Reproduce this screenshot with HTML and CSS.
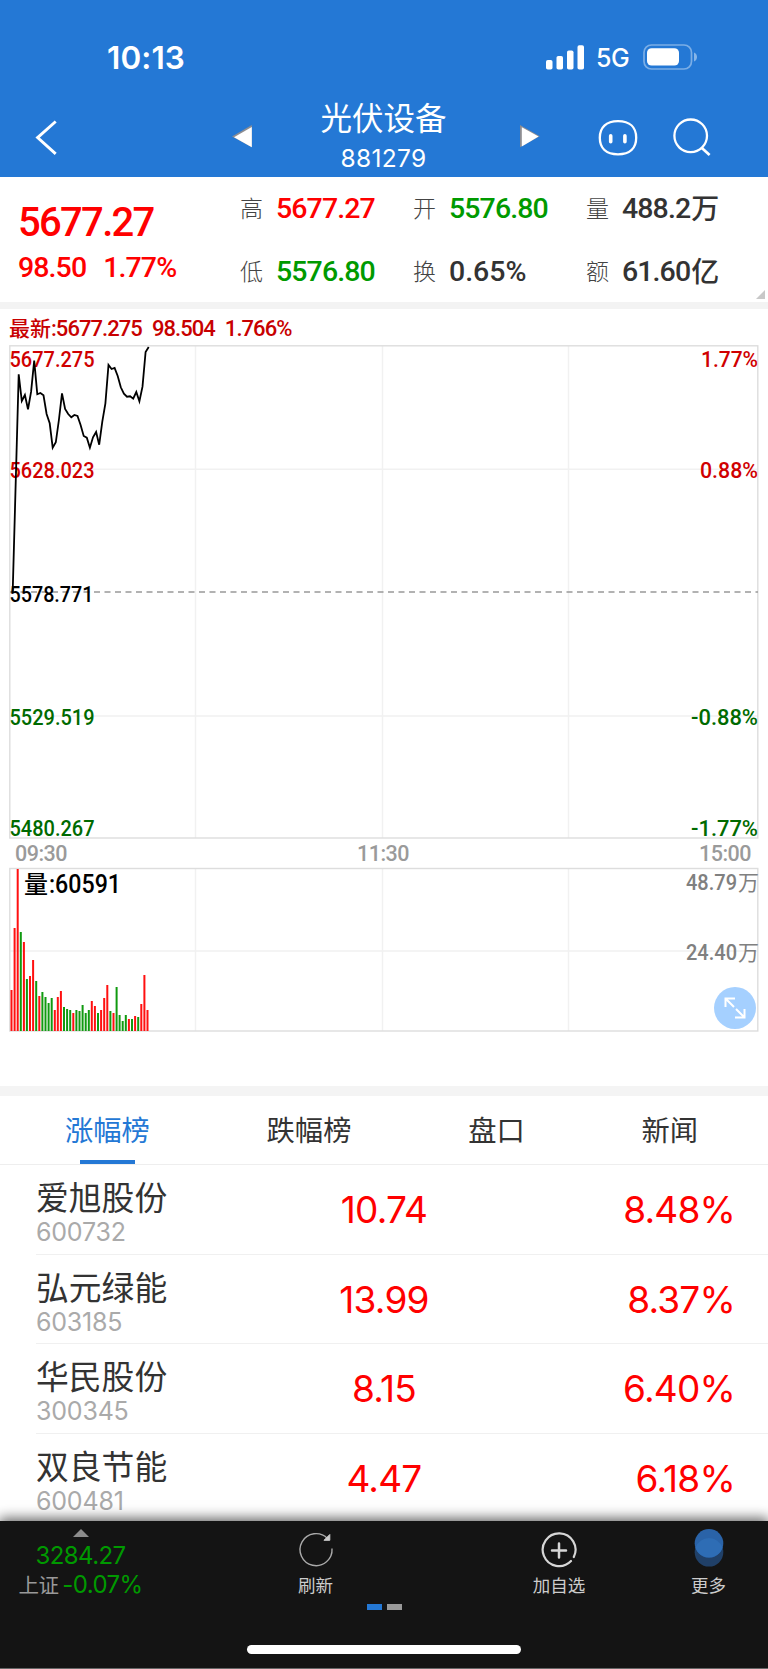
FILE: index.html
```html
<!DOCTYPE html>
<html lang="zh-CN">
<head>
  <meta charset="UTF-8" />
  <meta name="viewport" content="width=device-width, initial-scale=1.0" />
  <title>光伏设备 881279</title>
  <link rel="stylesheet" href="styles.css">
</head>
<body>
  <header class="header">
    <div class="status-bar">
      <span class="time">10:13</span>
      <svg class="signal" width="38" height="25" viewBox="0 0 38 25" fill="#fff">
        <rect x="0" y="15" width="6.5" height="9.5" rx="1.8" />
        <rect x="10.5" y="11" width="6.5" height="13.5" rx="1.8" />
        <rect x="21" y="5.5" width="6.5" height="19" rx="1.8" />
        <rect x="31.5" y="0.3" width="6.5" height="24.2" rx="1.8" />
      </svg>
      <span class="network">5G</span>
      <svg class="battery" width="55" height="26" viewBox="0 0 55 26">
        <rect x="1" y="1" width="47.5" height="24" rx="7.5" fill="none" stroke="#fff" stroke-opacity=".4" stroke-width="1.7" />
        <rect x="4" y="4.2" width="32" height="17.4" rx="4.6" fill="#fff" />
        <path d="M51 8.5c4 1.6 4 7.4 0 9z" fill="#fff" fill-opacity=".45" />
      </svg>
    </div>
    <nav class="nav">
      <svg class="back" width="24" height="38" viewBox="0 0 24 38" fill="none" stroke="#fff" stroke-width="2.9">
        <path d="M20.7 2.5 2.6 18.6l18.1 16.2" />
      </svg>
      <svg class="prev" width="20" height="24" viewBox="0 0 20 24">
        <path d="M0 11.5 19.8 0v22.2z" fill="#8d8d92" />
        <path d="M2 12.3 19.8 2v20.2z" fill="#fff" />
      </svg>
      <div class="title">
        <div class="title-name">光伏设备</div>
        <div class="title-code">881279</div>
      </div>
      <svg class="next" width="20" height="24" viewBox="0 0 20 24">
        <path d="M0 0 19.8 11.2 0 22.2z" fill="#8d8d92" />
        <path d="M1.8 2.3 18.6 11.6 1.8 21.4z" fill="#fff" />
      </svg>
      <svg class="robot" width="40" height="36" viewBox="0 0 40 36" fill="none" stroke="#fff">
        <path d="M20 1.2c12 0 18.2 6.3 18.2 16.6S32 34.3 20 34.3 1.8 28 1.8 17.8 8 1.2 20 1.2z" stroke-width="2.3" />
        <path d="M12.7 15.800v6M26.900 15.800v6" stroke-width="3.6" stroke-linecap="round" />
      </svg>
      <svg class="search" width="38" height="38" viewBox="0 0 38 38" fill="none" stroke="#fff" stroke-width="2.3">
        <circle cx="17.7" cy="17.8" r="16.3" />
        <path d="m28.600 29.800 8 7.200" stroke-width="2.7" />
      </svg>
    </nav>
  </header>

  <section class="quote">
    <div class="quote-main">
      <div class="quote-price">5677.27</div>
      <div class="quote-change"><span>98.50</span><span>1.77%</span></div>
    </div>
    <dl class="quote-grid">
      <div><dt>高</dt><dd class="up">5677.27</dd></div>
      <div><dt>开</dt><dd class="down">5576.80</dd></div>
      <div><dt>量</dt><dd>488.2<b>万</b></dd></div>
      <div><dt>低</dt><dd class="down">5576.80</dd></div>
      <div><dt>换</dt><dd class="rate">0.65%</dd></div>
      <div><dt>额</dt><dd>61.60<b>亿</b></dd></div>
    </dl>
    <i class="quote-corner"></i>
  </section>

  <section class="chart">
    <div class="latest"><b>最新</b><span>:5677.275</span><span>98.504</span><span>1.766%</span></div>
    <svg class="price-chart" width="768" height="495" viewBox="0 344 768 495">
      <g class="grid">
        <path d="M195.500 346V838M382.500 346V838M568.500 346V838M10 469.300H758M10 716H758" />
      </g>
      <rect class="frame" x="9.8" y="345.8" width="748" height="492.2" />
      <path class="middle" d="M10 592H758" />
      <g class="label up-label">
        <text x="9.5" y="367" textLength="85" lengthAdjust="spacingAndGlyphs">5677.275</text>
        <text x="9.5" y="478" textLength="85" lengthAdjust="spacingAndGlyphs">5628.023</text>
        <text x="701" y="367" textLength="57" lengthAdjust="spacingAndGlyphs">1.77%</text>
        <text x="700" y="478" textLength="58" lengthAdjust="spacingAndGlyphs">0.88%</text>
      </g>
      <g class="label">
        <text x="9.5" y="601.5" textLength="84" lengthAdjust="spacingAndGlyphs">5578.771</text>
      </g>
      <g class="label down-label">
        <text x="9.5" y="725" textLength="85" lengthAdjust="spacingAndGlyphs">5529.519</text>
        <text x="9.5" y="836" textLength="85" lengthAdjust="spacingAndGlyphs">5480.267</text>
        <text x="691" y="725" textLength="67" lengthAdjust="spacingAndGlyphs">-0.88%</text>
        <text x="691" y="836" textLength="67" lengthAdjust="spacingAndGlyphs">-1.77%</text>
      </g>
      <polyline class="line" id="priceLine" />
    </svg>
    <div class="times"><span>09:30</span><span>11:30</span><span>15:00</span></div>
    <div class="volume">
      <svg class="volume-chart" width="768" height="166" viewBox="0 867 768 166">
        <path class="grid" d="M195.500 869V1031M382.500 869V1031M568.500 869V1031M10 951H758" />
        <rect class="frame" x="9.8" y="868.5" width="748" height="162.5" />
        <g id="volumeBars"></g>
        <text class="volume-now" x="24" y="893"><tspan class="cjk">量</tspan></text>
        <text class="volume-now" x="49" y="893" textLength="72" lengthAdjust="spacingAndGlyphs">:60591</text>
        <g class="label axis">
          <text x="686" y="890" textLength="51" lengthAdjust="spacingAndGlyphs">48.79</text>
          <text x="738" y="890" class="cjk">万</text>
          <text x="686" y="960" textLength="51" lengthAdjust="spacingAndGlyphs">24.40</text>
          <text x="738" y="960" class="cjk">万</text>
        </g>
      </svg>
      <button class="expand">
        <svg width="22" height="22" viewBox="0 0 22 22" fill="none" stroke="#fff" stroke-width="2">
          <path d="M1.500 10V1.500H11M1.500 1.500l8.500 8.500M20.500 12v8.500H11M20.500 20.500l-8.500-8.500" />
        </svg>
      </button>
    </div>
  </section>

  <section class="rank">
    <div class="tabs">
      <span class="tab active">涨幅榜</span>
      <span class="tab">跌幅榜</span>
      <span class="tab">盘口</span>
      <span class="tab">新闻</span>
    </div>
    <div class="row">
      <div class="stock"><div class="name">爱旭股份</div><div class="code">600732</div></div>
      <div class="price">10.74</div><div class="percent">8.48%</div>
    </div>
    <div class="row">
      <div class="stock"><div class="name">弘元绿能</div><div class="code">603185</div></div>
      <div class="price">13.99</div><div class="percent">8.37%</div>
    </div>
    <div class="row">
      <div class="stock"><div class="name">华民股份</div><div class="code">300345</div></div>
      <div class="price">8.15</div><div class="percent">6.40%</div>
    </div>
    <div class="row">
      <div class="stock"><div class="name">双良节能</div><div class="code">600481</div></div>
      <div class="price">4.47</div><div class="percent">6.18%</div>
    </div>
  </section>

  <footer class="toolbar">
    <div class="tools">
      <div class="index">
        <i class="arrow-up"></i>
        <div class="index-value">3284.27</div>
        <div class="index-change"><span>上证</span>-0.07%</div>
      </div>
      <div class="tool">
        <svg width="40" height="40" viewBox="0 -2 40 40" fill="none" stroke="#aaa" stroke-width="1.4">
          <path d="M36 17.500A16 16 0 1 1 31.500 7.500" />
          <path d="M33.800 3.500v5.800h-5.800z" fill="#ccc" stroke="#ccc" stroke-width="1" />
        </svg>
        <span>刷新</span>
      </div>
      <div class="tool">
        <svg width="40" height="40" viewBox="0 -2 40 40" fill="none" stroke="#d6d6d6" stroke-width="2.2" stroke-linecap="round">
          <path d="M34.800 26A16.400 16.400 0 1 0 32 30" />
          <path d="M20 12.500v14M13 19.500h14" stroke-width="2.5" />
        </svg>
        <span>加自选</span>
      </div>
      <div class="tool">
        <svg width="40" height="40" viewBox="0 -2 40 40">
          <circle cx="20" cy="21.3" r="14.3" fill="#204068" />
          <circle cx="20" cy="12.3" r="14.3" fill="#2a63a8" />
          <path d="M6.450 16.800a14.300 14.300 0 0 1 27.100 0 14.300 14.300 0 0 1-27.100 0z" fill="#2e6db5" />
        </svg>
        <span>更多</span>
      </div>
    </div>
    <div class="pager"><i class="on"></i><i></i></div>
    <div class="home-bar"></div>
  </footer>

  <script>
    // y of each minute, in chart units
    const prices = [
      592, 374.3, 401, 395, 409.3, 391.7, 360.7, 394.3, 393, 395.3, 414, 423.3, 447.7, 442.3, 420,
      393.3, 409, 414, 417.3, 415, 416, 425, 436, 437.7, 447.7, 437.3, 432, 444.7, 421.7, 403.3,
      365, 369, 368, 376, 387.3, 393.7, 396.7, 396.3, 398.7, 392, 401.3, 386.7, 352, 347
    ];
    const points = prices.map((y, i) => {
      const x = i === 0 ? 12.7 : 18.7 + (i - 1) * 3.095;
      return x.toFixed(1) + "," + y;
    });
    document.getElementById("priceLine").setAttribute("points", points.join(" "));

    const volumes = [
      41, 103, 162, 99, 89, 52, 55, 71, 50, 35, 39, 34, 28, 33, 21, 34, 40, 24, 22, 21, 18, 21, 20,
      26, 18, 21, 30, 25, 18, 21, 33, 46, 20, 18, 44, 16, 10, 16, 12, 12, 15, 14, 27, 56, 21
    ];
    const sides = "rrrgrgrrgrgggg" + "rrrgggrgggggrrgrrrgrggggrgrgrrr";
    document.getElementById("volumeBars").innerHTML = volumes.map((v, i) => {
      const x = (10.5 + i * 3.09).toFixed(1);
      const color = sides[i] === "r" ? "#ff1010" : "#109a10";
      return `<rect x="${x}" y="${1031 - v}" width="2" height="${v}" fill="${color}" />`;
    }).join("");
  </script>
</body>
</html>
```

FILE: styles.css
```css
* {
  box-sizing: border-box;
}

body {
  margin: 0;
  width: 768px;
  height: 1669px;
  overflow: hidden;
  background: #fff;
  color: #333;
  font-family: Inter, "Noto Sans CJK SC", sans-serif;
  display: flex;
  flex-direction: column;
}

svg {
  display: block;
  flex: none;
}

b {
  font-family: "Noto Sans CJK SC", sans-serif;
  font-weight: 400;
}

/* header */
.header {
  height: 177px;
  flex: none;
  background: #2478d5;
  color: #fff;
}

.status-bar {
  height: 92px;
  padding: 22px 70px 0 107px;
  display: flex;
  align-items: center;
}

.time {
  font-size: 31.5px;
  font-weight: 600;
  letter-spacing: 0.1px;
  margin-right: auto;
}

.network {
  width: 34px;
  margin: 1px 13px 0 12px;
  font-size: 25px;
  font-weight: 500;
  letter-spacing: -0.4px;
}

.nav {
  height: 85px;
  display: grid;
  grid-template-columns: 197px 20px 268px 59px 75px 40px;
  padding-left: 35px;
  align-items: start;
}

.back {
  margin-top: 27px;
}

.prev, .next {
  margin-top: 33px;
}

.title {
  text-align: center;
  padding: 9px 5px 0 0;
}

.title-name {
  font-size: 31.5px;
  line-height: 36px;
}

.title-code {
  font-size: 24.5px;
  line-height: 42px;
  letter-spacing: 0.3px;
}

.robot {
  margin: 28px 0 0 19px;
}

.search {
  margin: 26px 0 0 19px;
}

/* quote */
.quote {
  position: relative;
  height: 132px;
  flex: none;
  border-bottom: 7px solid #f3f3f3;
  display: flex;
  font-family: Roboto, "Noto Sans CJK SC", sans-serif;
  font-weight: 500;
}

.quote-main {
  width: 240px;
  padding: 23px 0 0 18px;
  color: #f00;
}

.quote-price {
  font-size: 40px;
  line-height: 46px;
  letter-spacing: -1.7px;
}

.quote-change {
  display: flex;
  gap: 17px;
  font-size: 28.5px;
  line-height: 44px;
  letter-spacing: -0.9px;
}

.quote-grid {
  margin: 0;
  flex: 1;
  display: grid;
  grid-template-columns: 173px 173px 1fr;
  grid-template-rows: 63px 63px;
}

.quote-grid div {
  display: flex;
  align-items: center;
  gap: 13px;
}

.quote-grid dt {
  margin-top: -4px;
  font-size: 23px;
  font-weight: 300;
  color: #444;
}

.quote-grid dd {
  margin: 0;
  display: flex;
  align-items: center;
  font-size: 28.5px;
  letter-spacing: -0.9px;
}

.quote-grid b {
  margin: -4px 0 0 1px;
  font-size: 28px;
  line-height: 30px;
  font-weight: 500;
}

.quote-grid .up {
  color: #f00;
}

.quote-grid .down {
  color: #009a00;
}

.quote-grid .rate {
  letter-spacing: 0;
}

.quote-corner {
  position: absolute;
  right: 3px;
  bottom: 3px;
  border-left: 9px solid transparent;
  border-bottom: 9px solid #c8c8c8;
}

/* chart */
.chart {
  height: 777px;
  flex: none;
  font-family: Roboto, "Noto Sans CJK SC", sans-serif;
}

.latest {
  height: 35px;
  padding: 4px 0 0 9px;
  display: flex;
  align-items: center;
  color: #c80000;
  font-size: 22px;
  font-weight: 500;
  letter-spacing: -0.95px;
}

.latest b {
  margin-top: -3px;
  font-size: 21px;
  font-weight: 500;
  letter-spacing: 0;
  line-height: 30px;
}

.latest span + span {
  margin-left: 10px;
}

.frame {
  fill: none;
  stroke: #ddd;
  stroke-width: 1.4;
}

.grid {
  fill: none;
  stroke: #f1f1f1;
  stroke-width: 1.4;
}

.middle {
  stroke: #999;
  stroke-width: 1.4;
  stroke-dasharray: 6 4.5;
}

.line {
  fill: none;
  stroke: #000;
  stroke-width: 1.8;
}

.label {
  font-size: 21.5px;
  font-weight: 500;
  fill: #000;
}

.up-label {
  fill: #d00000;
}

.down-label {
  fill: #006a00;
}

.axis {
  fill: #808080;
}

.axis .cjk {
  font-size: 21px;
  font-weight: 400;
}

.times {
  height: 28px;
  padding: 0 17px 0 15px;
  display: flex;
  justify-content: space-between;
  align-items: center;
  color: #9a9a9a;
  font-size: 21.5px;
  font-weight: 500;
  letter-spacing: -0.5px;
}

.volume {
  position: relative;
}

.volume-now {
  font-size: 25px;
  font-weight: 500;
}

.volume-now .cjk {
  font-size: 24px;
}

.expand {
  position: absolute;
  left: 714px;
  top: 120px;
  width: 42px;
  height: 42px;
  padding: 0;
  border: none;
  border-radius: 50%;
  background: #a5d0ff;
  display: flex;
  align-items: center;
  justify-content: center;
}

/* rank list */
.rank {
  height: 435px;
  flex: none;
  overflow: hidden;
  border-top: 10px solid #f4f4f4;
}

.tabs {
  height: 69px;
  padding: 0 70px 0 65px;
  border-bottom: 1px solid #eee;
  display: flex;
  justify-content: space-between;
}

.tab {
  position: relative;
  font-size: 28.3px;
  line-height: 70px;
}

.tab.active {
  color: #2478d5;
}

.tab.active::after {
  content: "";
  position: absolute;
  left: 15px;
  right: 15px;
  bottom: 0;
  height: 4px;
  background: #2478d5;
}

.row {
  height: 89.5px;
  margin-left: 36px;
  padding-right: 33px;
  border-bottom: 1px solid #f0f0f0;
  display: grid;
  grid-template-columns: 248px 200px 1fr;
}

.name {
  font-size: 32.8px;
  line-height: 36px;
  padding-top: 15px;
}

.code {
  color: #aaa;
  font-size: 25px;
  line-height: 32px;
  letter-spacing: -0.2px;
}

.price, .percent {
  color: #f00;
  font-size: 37px;
  line-height: 90px;
  letter-spacing: -0.8px;
}

.price {
  text-align: center;
}

.percent {
  text-align: right;
}

/* bottom toolbar */
.toolbar {
  position: relative;
  height: 148px;
  flex: none;
  background: #141414;
  border-bottom: 1px solid #666;
  box-shadow: 0 -2px 12px 1px rgba(0, 0, 0, 0.6);
}

.tools {
  height: 83px;
  padding-left: 18px;
  display: grid;
  grid-template-columns: 125px 345px 142px 157px;
}

.index {
  display: flex;
  flex-direction: column;
  align-items: center;
  color: #090;
  font-size: 24px;
  letter-spacing: -0.6px;
  white-space: nowrap;
}

.arrow-up {
  margin-top: 8px;
  border: 8px solid transparent;
  border-top: none;
  border-bottom: 8px solid #8c8c8c;
}

.index-value {
  line-height: 29px;
  margin-top: 4px;
}

.index-change {
  line-height: 29px;
}

.index-change span {
  color: #999;
  font-size: 20.5px;
  margin-right: 4px;
}

.tool {
  display: flex;
  flex-direction: column;
  align-items: center;
  padding-top: 8px;
  color: #ccc;
  font-size: 17.5px;
}

.tool span {
  line-height: 30px;
  margin-top: 2px;
}

.pager {
  display: flex;
  justify-content: center;
  gap: 5px;
}

.pager i {
  width: 15px;
  height: 6px;
  background: #999;
}

.pager .on {
  background: #2478d5;
}

.home-bar {
  width: 274px;
  height: 9px;
  margin: 35px auto 0;
  border-radius: 5px;
  background: #fff;
}
```
